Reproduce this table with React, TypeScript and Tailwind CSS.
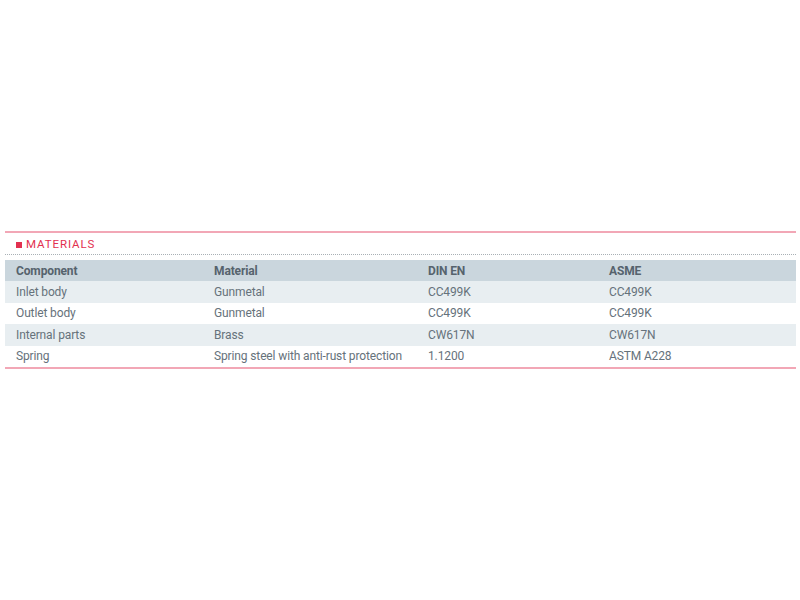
const rows = [
  ["Inlet body", "Gunmetal", "CC499K", "CC499K"],
  ["Outlet body", "Gunmetal", "CC499K", "CC499K"],
  ["Internal parts", "Brass", "CW617N", "CW617N"],
  ["Spring", "Spring steel with anti-rust protection", "1.1200", "ASTM A228"],
];

const cols = "grid grid-cols-[198px_214px_181px_198px]";

export default function App() {
  return (
    <div className="w-[800px] h-[600px] bg-white pt-[231px] pl-[5px] font-['Roboto',sans-serif]">
      <div className="w-[791px]">
        <div className="h-[2px] bg-[#f2a7b6]" />
        <div className="flex items-center gap-[4px] pl-[11px] pt-[4px] h-[20px]">
          <span className="w-[6px] h-[6px] bg-[#e2304f]" />
          <span className="text-[11.5px] leading-none tracking-[0.9px] text-[#e2304f]">MATERIALS</span>
        </div>
        <div className="border-t border-dotted border-[#a9b0b5] mt-[1px]" />
        <div className="h-[5px]" />
        <div className={`${cols} h-[21px] items-center bg-[#cad6dd] text-[12px] tracking-[-0.13px] font-bold text-[#56636d]`}>
          <div className="pl-[11px]">Component</div>
          <div className="pl-[11px]">Material</div>
          <div className="pl-[11px]">DIN EN</div>
          <div className="pl-[11px]">ASME</div>
        </div>
        {rows.map((r, i) => (
          <div
            key={i}
            className={`${cols} h-[21.5px] items-center text-[12px] tracking-[-0.13px] text-[#66727b] ${i % 2 === 0 ? "bg-[#e8eef1]" : "bg-white"}`}
          >
            {r.map((c, j) => (
              <div key={j} className="pl-[11px] whitespace-nowrap">{c}</div>
            ))}
          </div>
        ))}
        <div className="h-[2px] bg-[#f2a7b6]" />
      </div>
    </div>
  );
}
